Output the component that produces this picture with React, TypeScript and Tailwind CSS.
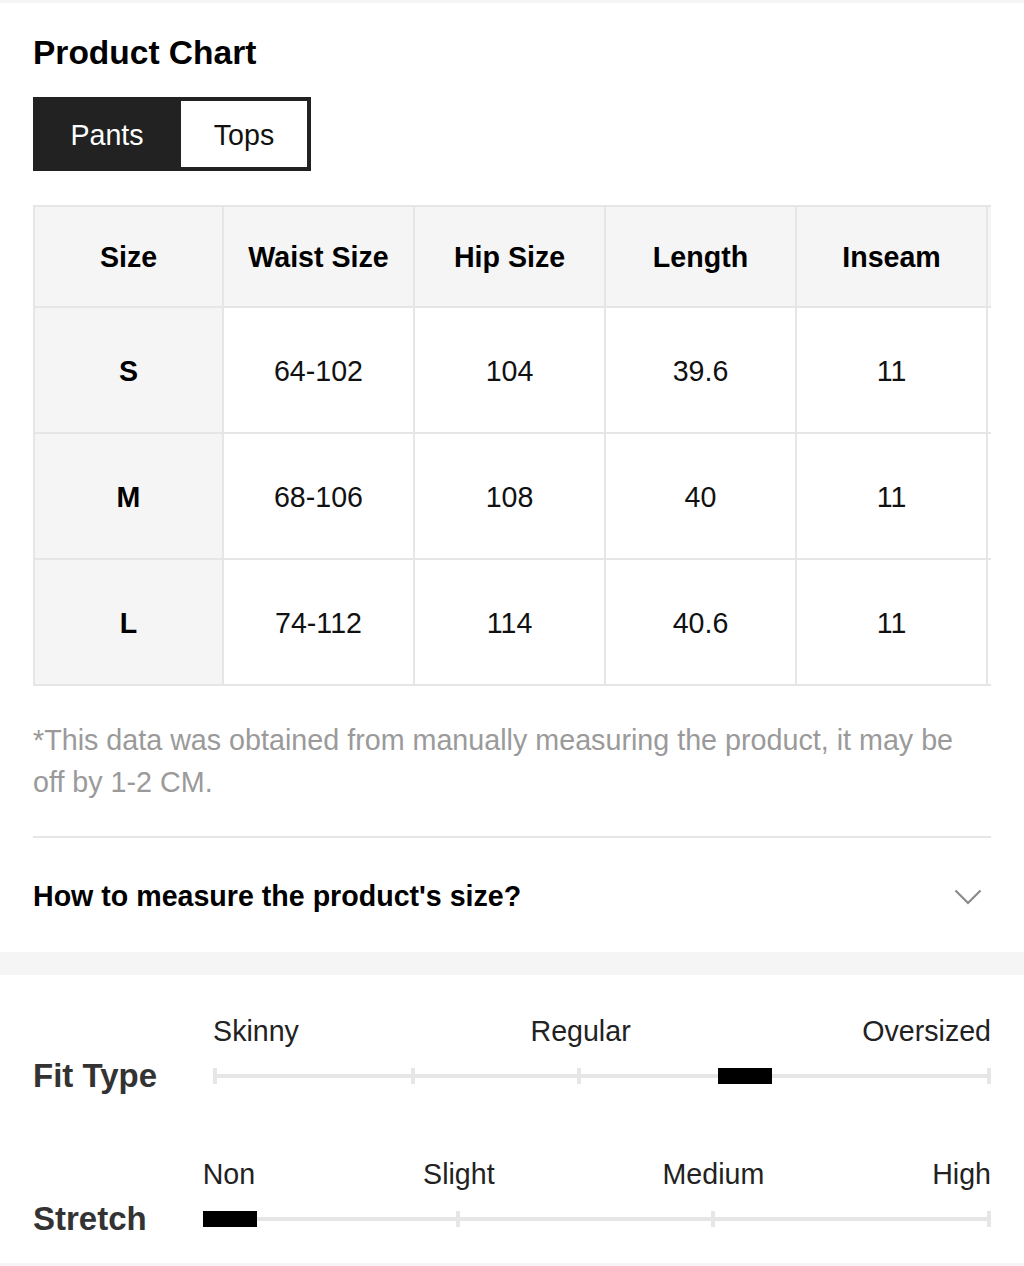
import React from "react";

const headers = ["Size", "Waist Size", "Hip Size", "Length", "Inseam", ""];
const rows = [
  ["S", "64-102", "104", "39.6", "11", ""],
  ["M", "68-106", "108", "40", "11", ""],
  ["L", "74-112", "114", "40.6", "11", ""],
];

function Cell({ children, first, header }: { children: React.ReactNode; first: boolean; header?: boolean }) {
  return (
    <div
      className={
        "flex shrink-0 items-center justify-center border-r-2 border-b-2 border-[#e6e6e6] pt-[2px] " +
        (first ? "w-[189px] " : "w-[191px] ") +
        (header ? "h-[101px] bg-[#f5f5f5] font-bold text-black " : "h-[126px] ") +
        (!header && first ? "bg-[#f5f5f5] font-bold text-black" : !header ? "bg-white text-[#111]" : "")
      }
    >
      {children}
    </div>
  );
}

export default function App() {
  return (
    <div className="w-[1024px] min-h-[1266px] bg-white font-['Liberation_Sans',Arial,Helvetica,sans-serif] text-black">
      <div className="h-[3px] bg-[#f5f5f5]" />
      <div className="px-[33px] pt-[30px]">
        <h1 className="text-[33.5px] font-bold leading-[40px]">Product Chart</h1>
        <div className="mt-[24px] flex h-[74px] w-[278px] border-4 border-[#222] text-[28.6px]">
          <div className="flex w-[144px] items-center justify-center bg-[#222] pt-[3px] pr-[4px] text-white">Pants</div>
          <div className="flex flex-1 items-center justify-center bg-white pt-[3px] text-[#111]">Tops</div>
        </div>

        <div className="mt-[34px] overflow-hidden text-[28.6px]">
          <div className="flex w-max flex-col border-l-2 border-t-2 border-[#e6e6e6]">
            <div className="flex">
              {headers.map((h, i) => (
                <Cell key={i} first={i === 0} header>
                  {h}
                </Cell>
              ))}
            </div>
            {rows.map((r, ri) => (
              <div key={ri} className="flex">
                {r.map((v, i) => (
                  <Cell key={i} first={i === 0}>
                    {v}
                  </Cell>
                ))}
              </div>
            ))}
          </div>
        </div>

        <p className="mt-[33px] max-w-[935px] text-[28.7px] leading-[42px] text-[#9a9a9a]">
          *This data was obtained from manually measuring the product, it may be off by 1-2 CM.
        </p>

        <div className="mt-[33px] h-[2px] bg-[#e6e6e6]" />
        <div className="flex h-[114px] items-center justify-between pt-[3px]">
          <span className="text-[28.6px] font-bold text-black">How to measure the product's size?</span>
          <svg width="28" height="16" viewBox="0 0 28 16" className="mr-[9px]">
            <polyline points="1.5,1.5 14,14 26.5,1.5" fill="none" stroke="#8a8a8a" strokeWidth="2.2" />
          </svg>
        </div>
      </div>

      <div className="h-[23px] bg-[#f5f5f5]" />

      <div className="px-[33px] pt-[40px] pb-[36px]">
        <div className="flex items-end gap-[56px]">
          <div className="flex h-[16px] items-center whitespace-nowrap text-[33px] font-bold text-[#333]">Fit Type</div>
          <div className="flex flex-1 flex-col gap-[21px]">
            <div className="flex justify-between text-[28.6px] leading-[32px] text-[#222]">
              <span>Skinny</span>
              <span>Regular</span>
              <span>Oversized</span>
            </div>
            <div className="relative h-[16px]">
              <div className="absolute left-0 right-0 top-[6px] h-[4px] bg-[#e6e6e6]" />
              <div className="absolute left-0 top-0 h-[16px] w-[4px] bg-[#e6e6e6]" />
              <div className="absolute left-[198px] top-0 h-[16px] w-[4px] bg-[#e6e6e6]" />
              <div className="absolute left-[364px] top-0 h-[16px] w-[4px] bg-[#e6e6e6]" />
              <div className="absolute right-0 top-0 h-[16px] w-[4px] bg-[#e6e6e6]" />
              <div className="absolute left-[505px] top-0 h-[16px] w-[54px] bg-black" />
            </div>
          </div>
        </div>

        <div className="mt-[74px] flex items-end gap-[56px]">
          <div className="flex h-[16px] items-center whitespace-nowrap text-[33px] font-bold text-[#333]">Stretch</div>
          <div className="flex flex-1 flex-col gap-[21px]">
            <div className="flex justify-between text-[28.6px] leading-[32px] text-[#222]">
              <span>Non</span>
              <span>Slight</span>
              <span>Medium</span>
              <span>High</span>
            </div>
            <div className="relative h-[16px]">
              <div className="absolute left-0 right-0 top-[6px] h-[4px] bg-[#e6e6e6]" />
              <div className="absolute left-[253px] top-0 h-[16px] w-[4px] bg-[#e6e6e6]" />
              <div className="absolute left-[508px] top-0 h-[16px] w-[4px] bg-[#e6e6e6]" />
              <div className="absolute right-0 top-0 h-[16px] w-[4px] bg-[#e6e6e6]" />
              <div className="absolute left-0 top-0 h-[16px] w-[54px] bg-black" />
            </div>
          </div>
        </div>
      </div>
      <div className="h-[3px] bg-[#f5f5f5]" />
    </div>
  );
}
